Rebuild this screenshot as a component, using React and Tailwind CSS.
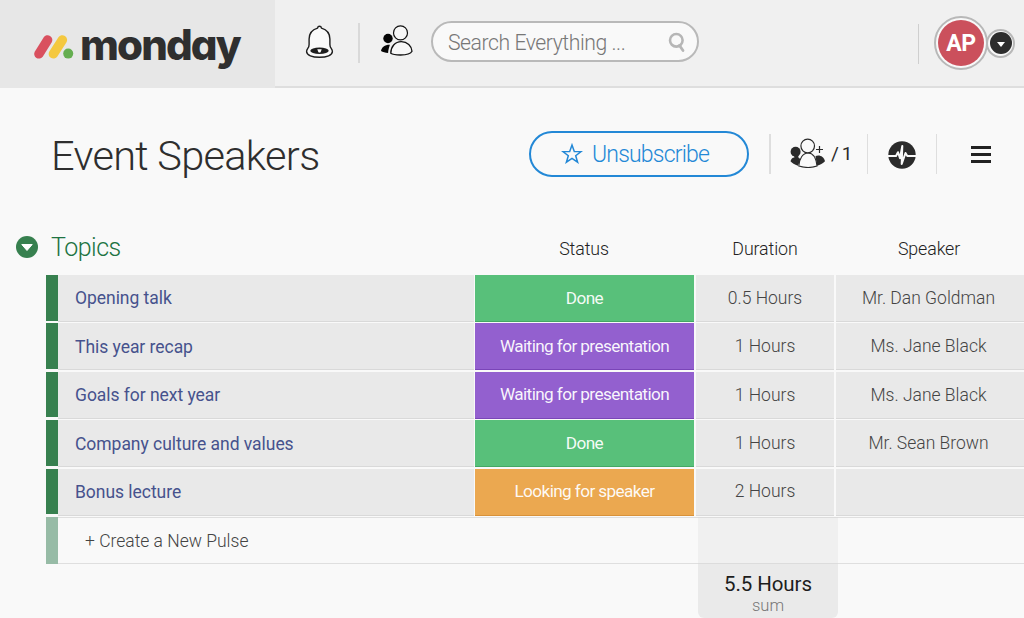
import React from "react";

const pulses = [
  { name: "Opening talk", status: "Done", duration: "0.5 Hours", speaker: "Mr. Dan Goldman" },
  { name: "This year recap", status: "Waiting for presentation", duration: "1 Hours", speaker: "Ms. Jane Black" },
  { name: "Goals for next year", status: "Waiting for presentation", duration: "1 Hours", speaker: "Ms. Jane Black" },
  { name: "Company culture and values", status: "Done", duration: "1 Hours", speaker: "Mr. Sean Brown" },
  { name: "Bonus lecture", status: "Looking for speaker", duration: "2 Hours", speaker: "" },
];

const statusColors = {
  "Done": "bg-[#58c07a] border-[#43a864]",
  "Waiting for presentation": "bg-[#9360cf] border-[#7a45b8]",
  "Looking for speaker": "bg-[#eba850] border-[#d8923a]",
};

function Logo() {
  return (
    <div className="flex h-[88px] w-[275px] shrink-0 items-center bg-[#e7e7e7] pl-[34px]">
      <svg className="mt-[6px] shrink-0" width="40" height="26" viewBox="0 0 40 26" fill="none" strokeLinecap="round">
        <path d="M4.900 19.900 13.600 5.900" stroke="#d9505f" strokeWidth="9.400" />
        <path d="M19.400 19.900 28.400 5.900" stroke="#f4c83f" strokeWidth="9.400" />
        <circle cx="34.200" cy="19.600" r="5" fill="#65ae50" />
      </svg>
      <span className="mt-px ml-[6px] font-['Inter',sans-serif] text-[42px] leading-none font-extrabold tracking-[-1.9px] text-[#2f2f2f] [font-feature-settings:'cv11']">
        monday
      </span>
    </div>
  );
}

function BellIcon() {
  return (
    <svg width="30" height="34" viewBox="0 0 30 34" fill="none">
      <path
        d="M14.500 1.200c-1.400 0-1.800.9-2 1.900C7.400 4.600 4.100 8.400 4.100 14v5.400c0 1.800-.4 2.800-1.300 4-.7 1-1.200 2-1.200 3.200 0 3.600 5.700 5.700 12.900 5.700s12.900-2.100 12.900-5.700c0-1.200-.5-2.200-1.200-3.200-.9-1.200-1.300-2.200-1.300-4V14c0-5.600-3.300-9.400-8.400-10.900-.2-1-.6-1.900-2-1.900Z"
        stroke="#1e1e1e"
        strokeWidth="1.400"
        fill="#fafafa"
      />
      <ellipse cx="14.500" cy="25.700" rx="9.200" ry="3.200" fill="#1e1e1e" />
      <path d="M12.300 24.300h4.400l-1 2.600c-.5.700-1.900.7-2.400 0Z" fill="#fff" />
    </svg>
  );
}

function PeopleIcon() {
  return (
    <svg width="32" height="32" viewBox="0 0 32 32">
      <circle cx="7" cy="13.500" r="4.700" fill="#050505" />
      <path d="M0 26c.8-3.800 3.700-6.300 8.900-6.200-.8 2.800-1.700 5.200-1.800 8.100C4.300 27.800 1.800 27.200 0 26Z" fill="#050505" />
      <circle cx="19.500" cy="7.900" r="7" fill="#f7f7f7" stroke="#111" strokeWidth="1.200" />
      <path
        d="M9.800 28.300c0-6.700 4.200-11.600 10.500-11.600 6 0 10.400 4.400 10.700 9.600-1.200 2.400-6.200 3.700-11.500 3.700-4 0-8.300-.7-9.700-1.700Z"
        fill="#f7f7f7"
        stroke="#111"
        strokeWidth="1.300"
      />
    </svg>
  );
}

function InviteIcon() {
  return (
    <svg width="36" height="30" viewBox="0 0 36 30">
      <circle cx="5.600" cy="13.800" r="5" fill="#2b2b2b" />
      <path d="M4 17h4l.7 3 2.200 1-3 6.800C4.600 26.700 2 25 .5 23.300c.7-2.200 1.800-3.500 3.900-3.700Z" fill="#2b2b2b" />
      <path d="M25.500 18c4.300-1.600 8.300.6 9.500 5.300-2.100 2.100-4.900 3.700-8 4.500Z" fill="#2b2b2b" />
      <path d="M8.800 28c.6-7.200 3.800-13 9.200-13s8.200 5.800 9 13c-5.200 1.800-12.600 1.800-18.200 0Z" fill="#fafafa" stroke="#2b2b2b" strokeWidth="1.100" />
      <circle cx="17.700" cy="8" r="6.800" fill="#fafafa" stroke="#2b2b2b" strokeWidth="1.200" />
      <path d="M29.500 8v7M26 11.500h7" stroke="#2b2b2b" strokeWidth="1.200" />
    </svg>
  );
}

function PulseIcon() {
  return (
    <svg width="28" height="28" viewBox="0 0 28 28" fill="none">
      <circle cx="14" cy="14" r="13.700" fill="#2b2b2b" />
      <path d="M0 15h8l2-3.800 2 6L14.300 5l-.6 18 3.800-11 1.800 3H28" stroke="#fafafa" strokeWidth="2" strokeLinejoin="round" />
    </svg>
  );
}

function Header() {
  return (
    <header className="flex h-[88px]">
      <Logo />
      <div className="flex min-w-0 flex-1 items-start border-b-2 border-[#dedede] bg-[#f0f0f0]">
        <div className="mt-[25px] ml-[30px]">
          <BellIcon />
        </div>
        <div className="mt-[23px] ml-[23px] h-10 w-0.5 bg-[#d9d9d9]" />
        <div className="mt-[25px] ml-[21px]">
          <PeopleIcon />
        </div>
        <div className="mt-[21px] ml-[18px] flex h-[41px] w-[268px] items-center justify-between rounded-full border-2 border-[#b9b9b9] bg-[#f9f9f9] pr-[11px] pl-[15px]">
          <span className="mt-[2px] text-[21.2px] font-light tracking-[-0.45px] whitespace-nowrap text-[#777]">Search Everything ...</span>
          <svg className="mt-0.5" width="18" height="21" viewBox="0 0 18 21" fill="none" stroke="#b6b6b6">
            <circle cx="8.300" cy="8.300" r="6.300" strokeWidth="2.600" />
            <path d="m11.500 13.500 3.500 5" strokeWidth="2.800" strokeLinecap="round" />
          </svg>
        </div>
        <div className="mt-6 mr-[15px] ml-auto h-10 w-px bg-[#cfcfcf]" />
        <div className="mt-4 flex items-center pr-[9px]">
          <div className="flex size-[54px] items-center justify-center rounded-full border-2 border-[#b8b8b8] bg-[#f8f8f8]">
            <div className="flex size-[46px] items-center justify-center rounded-full bg-[#cb505c] pt-[2px] text-[23px] font-bold tracking-[-0.5px] text-white">
              AP
            </div>
          </div>
          <div className="-ml-[2px] flex size-[29px] items-center justify-center rounded-full border-2 border-[#b8b8b8] bg-[#f8f8f8]">
            <div className="flex size-[22px] shrink-0 items-center justify-center rounded-full bg-[#2d2d2d] pt-0.5">
              <svg width="8" height="5" viewBox="0 0 8 5">
                <path d="M0 0h8L4 5Z" fill="#fff" />
              </svg>
            </div>
          </div>
        </div>
      </div>
    </header>
  );
}

function BoardTitle() {
  return (
    <div className="mt-[43px] flex h-[46px] items-center pl-[51px]">
      <h1 className="mt-[3px] w-[478px] text-[41.5px] leading-none font-light tracking-[-0.7px] text-[#2e2e2e]">
        Event Speakers
      </h1>
      <button className="flex h-[46px] w-[220px] shrink-0 items-center rounded-full border-2 border-[#2388d6] pl-[30px] text-[#2388d6]">
        <svg className="mt-[-2px]" width="22" height="21" viewBox="0 0 22 21" fill="none">
          <path d="m11 2 2.300 6.400 6.800.2-5.400 4.100 1.900 6.500L11 15.300l-5.600 3.900 1.900-6.500-5.400-4.100 6.800-.2Z" stroke="currentColor" strokeWidth="1.500" />
        </svg>
        <span className="ml-[9px] text-[23px] leading-none font-light tracking-[-0.8px]">Unsubscribe</span>
      </button>
      <div className="ml-5 h-10 w-0.5 shrink-0 bg-[#dedede]" />
      <div className="mt-[-3px] ml-[19px] shrink-0">
        <InviteIcon />
      </div>
      <span className="ml-[5px] w-[35px] shrink-0 text-[19px] tracking-[-0.9px] whitespace-nowrap text-[#2b2b2b]">/ 1</span>
      <div className="ml-[1px] h-10 w-px shrink-0 bg-[#dedede]" />
      <div className="mt-px ml-5 shrink-0">
        <PulseIcon />
      </div>
      <div className="ml-5 h-10 w-px shrink-0 bg-[#dedede]" />
      <div className="ml-[34px] flex w-5 shrink-0 flex-col gap-1">
        <div className="h-[3px] bg-[#222]" />
        <div className="h-[3px] bg-[#222]" />
        <div className="h-[3px] bg-[#222]" />
      </div>
    </div>
  );
}

function GroupHeader() {
  return (
    <div className="mt-[50px] flex h-12 items-center pl-4 text-[17.8px] font-light tracking-[-0.1px] text-[#222]">
      <div className="mt-[-8px] flex size-[22px] items-center justify-center rounded-full bg-[#37804f]">
        <svg width="12" height="7" viewBox="0 0 12 7">
          <path d="M.8.500h10.400L6 6.500Z" fill="#fff" stroke="#fff" strokeLinejoin="round" />
        </svg>
      </div>
      <h2 className="mt-[-7px] ml-[13px] w-[424px] text-[25px] font-light tracking-[-0.5px] text-[#207342]">Topics</h2>
      <div className="mt-[-3px] w-[218px] text-center">Status</div>
      <div className="mt-[-3px] ml-[2px] w-[140px] text-center">Duration</div>
      <div className="mt-[-3px] w-[188px] text-center">Speaker</div>
    </div>
  );
}

function PulseRow({ pulse }) {
  return (
    <div className="flex h-[48.4px] pl-[46px] text-[17.5px]">
      <div className="h-[45.5px] w-[12px] shrink-0 bg-[#37804f]" />
      <div className="flex h-[47px] w-[416px] shrink-0 items-center border-b border-[#d9d9d9] bg-[#e9e9e9] pt-px pl-[17px] tracking-[-0.04px] text-[#46528d]">
        {pulse.name}
      </div>
      <div className={`ml-px flex h-[47px] w-[219px] shrink-0 items-center justify-center border-b pt-px text-[17.2px] tracking-[-0.6px] text-white/95 ${statusColors[pulse.status]}`}>
        {pulse.status}
      </div>
      <div className="ml-[2px] flex h-[47px] w-[138px] shrink-0 items-center justify-center border-b border-[#d9d9d9] bg-[#e9e9e9] font-light text-[#444]">
        {pulse.duration}
      </div>
      <div className="ml-[2px] flex h-[47px] flex-1 items-center justify-center border-b border-[#d9d9d9] bg-[#e9e9e9] pr-[3px] font-light text-[#444]">
        {pulse.speaker}
      </div>
    </div>
  );
}

function NewPulseRow() {
  return (
    <div className="flex h-[47px] pl-[46px] text-[17.5px] font-light text-[#444]">
      <div className="w-[12px] shrink-0 bg-[#97bba6]" />
      <div className="flex w-[640px] shrink-0 items-center border-y border-[#dfdfdf] pt-px pl-[27px]">+ Create a New Pulse</div>
      <div className="w-[140px] shrink-0 border-y border-[#dcdcdc] bg-[#f0f0f0]" />
      <div className="flex-1 border-y border-[#dfdfdf]" />
    </div>
  );
}

export default function App() {
  return (
    <div className="h-[618px] w-[1024px] overflow-hidden bg-[#f9f9f9] font-['Roboto',sans-serif]">
      <Header />
      <BoardTitle />
      <GroupHeader />
      {pulses.map((pulse) => (
        <PulseRow key={pulse.name} pulse={pulse} />
      ))}
      <NewPulseRow />
      <div className="ml-[698px] flex h-[54px] w-[140px] flex-col items-center rounded-b-md bg-[#eaeaea] pt-[8px]">
        <div className="text-[20.5px] leading-[24px] tracking-[-0.1px] text-[#1d1d1d]">5.5 Hours</div>
        <div className="text-[16.5px] leading-[20px] font-light text-[#777]">sum</div>
      </div>
    </div>
  );
}
